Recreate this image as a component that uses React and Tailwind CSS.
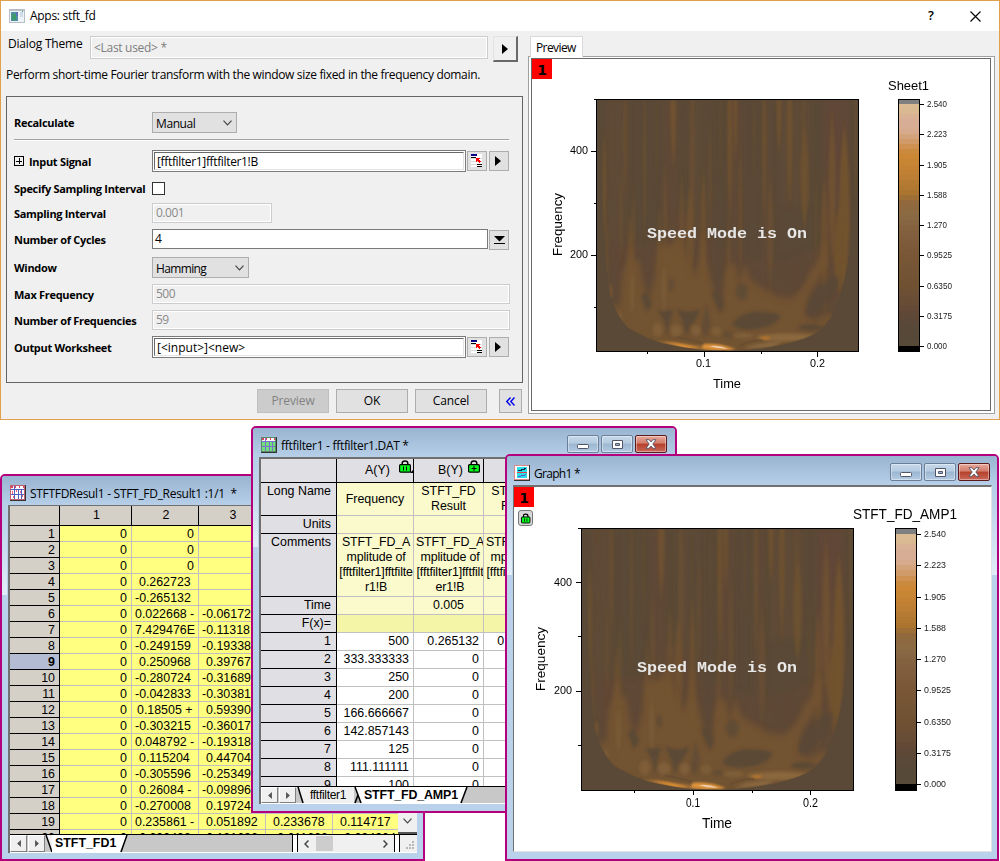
import React from "react";

const UI = "font-['Open_Sans','Noto_Sans',sans-serif]";
const SHEET = "font-['Liberation_Sans',Arial,sans-serif]";

/* ---------- Spectrogram drawing ---------- */

// x centre, top, bottom, half width, opacity
const STREAKS = [
  [222, 300, 640, 9, 0.75], [285, 120, 520, 8, 0.6], [272, 400, 720, 6, 0.5], [245, 150, 520, 5, 0.25],
  [343, 120, 660, 7, 0.55], [310, 460, 800, 9, 0.5], [430, 60, 420, 13, 0.95], [405, 380, 760, 10, 0.5],
  [487, 120, 640, 12, 0.5], [455, 420, 780, 14, 0.55], [480, 460, 800, 18, 0.8], [520, 400, 860, 14, 0.7],
  [540, 250, 640, 8, 0.4], [600, 0, 600, 10, 0.9], [617, 60, 400, 8, 0.9], [632, 330, 760, 8, 0.55],
  [672, 120, 480, 8, 0.25], [704, 60, 600, 8, 0.75], [722, 420, 820, 14, 0.5], [748, 20, 380, 12, 0.85],
  [780, 40, 540, 12, 0.85], [825, 280, 600, 18, 0.75], [822, 120, 400, 12, 0.3], [860, 400, 760, 10, 0.25],
  [908, 230, 700, 17, 0.8], [885, 440, 860, 18, 0.7], [945, 280, 800, 24, 1], [930, 520, 800, 26, 0.9],
  [978, 60, 540, 6, 0.5], [380, 120, 520, 8, 0.25], [572, 150, 460, 6, 0.25], [230, 560, 860, 7, 0.6],
  [388, 520, 820, 12, 0.5], [300, 540, 860, 12, 0.7], [596, 560, 900, 14, 0.5],
];

function Spectrogram({ id, x, y, width, height }) {
  return (
    <svg x={x} y={y} width={width} height={height} viewBox="200 209 786 755" preserveAspectRatio="none">
      <defs>
        <clipPath id={id + "-bowl"}>
          <path d="M204 209L217 480Q218 600 228 700L240 800L256 840L272 868L292 893Q340 922 395 940Q460 956 525 961L620 963Q700 958 740 948Q800 938 850 915Q890 892 915 845Q950 760 964 640L986 440V209Z" />
        </clipPath>
        <filter id={id + "-s"} x="-10%" y="-10%" width="120%" height="120%"><feGaussianBlur stdDeviation="4 10" /></filter>
        <filter id={id + "-m"} x="-20%" y="-20%" width="140%" height="140%"><feGaussianBlur stdDeviation="8 10" /></filter>
        <filter id={id + "-f"} x="-20%" y="-20%" width="140%" height="140%"><feGaussianBlur stdDeviation="5" /></filter>
        <filter id={id + "-h"} x="-20%" y="-50%" width="140%" height="200%"><feGaussianBlur stdDeviation="2.5" /></filter>
      </defs>
      <rect x="200" y="209" width="786" height="755" fill="#5a4936" />
      <g clipPath={`url(#${id}-bowl)`}>
        <g filter={`url(#${id}-m)`} fill="#624937">
          <rect x="225" y="209" width="70" height="640" opacity=".5" />
          <rect x="395" y="209" width="50" height="500" opacity=".6" />
          <rect x="475" y="209" width="40" height="400" opacity=".5" />
          <rect x="520" y="209" width="30" height="400" opacity=".4" />
          <rect x="595" y="209" width="45" height="500" opacity=".6" />
          <rect x="700" y="209" width="26" height="560" opacity=".7" />
          <rect x="745" y="209" width="100" height="320" opacity=".5" />
          <rect x="880" y="209" width="80" height="560" opacity=".8" />
          <path d="M225 640L290 640L370 640L450 540L560 640L640 680L740 700L860 660L960 560L950 800L850 930L500 970L300 900Z" opacity=".7" />
        </g>
        <g filter={`url(#${id}-s)`} fill="#75552f" opacity=".85">
          {STREAKS.map(([cx, t, b, w, o], i) => (
            <path key={i} opacity={o} d={`M${cx} ${t}Q${cx + 1.35 * w} ${(t + b) / 2} ${cx} ${b}Q${cx - 1.35 * w} ${(t + b) / 2} ${cx} ${t}Z`} />
          ))}
        </g>
        <path
          filter={`url(#${id}-m)`}
          fill="#745431"
          opacity=".92"
          d="M240 870L256 820L270 830L276 730L292 690L300 640L312 695L328 690L340 770L358 800L374 740L384 640L400 650L430 640L446 600L474 690L490 740L508 690L518 600L530 700L552 780L562 830L578 830L582 740L598 700L618 705L628 760L645 700L662 750L700 775L745 800L785 805L820 770L845 720L868 690L886 620L892 700L870 745L840 790L826 850L850 872L900 850L920 860L860 930L740 965L500 975L380 960L290 910Z"
        />
        <g filter={`url(#${id}-f)`} fill="#5b4936">
          <path d="M384 844L430 840L418 880L414 924L404 878Z" opacity=".95" />
          <path d="M440 836Q475 856 510 838Q500 872 480 888L469 920L460 880Z" opacity=".95" />
          <path d="M514 900L529 820L542 880L528 924Z" opacity=".7" />
          <path d="M546 790L562 780L582 822L572 852Z" />
          <path d="M333 800L350 783L366 822L350 846Z" />
          <ellipse cx="424" cy="765" rx="8" ry="18" opacity=".7" />
          <ellipse cx="636" cy="785" rx="18" ry="26" opacity=".75" />
          <path d="M606 885Q630 848 680 846Q740 846 752 858Q740 887 690 896Q640 907 606 885Z" />
          <path d="M712 760Q715 690 740 720L760 770Q740 790 712 760Z" opacity=".45" />
          <path d="M760 690L825 680L820 750L785 795L765 750Z" opacity=".55" />
          <path d="M828 855Q836 795 876 765Q910 730 928 745Q925 795 890 820Q860 864 828 855Z" opacity=".85" />
          <ellipse cx="842" cy="893" rx="36" ry="10" />
          <path d="M550 650L585 630L577 750L560 780Z" opacity=".6" />
          <ellipse cx="594" cy="915" rx="14" ry="10" opacity=".6" />
        </g>
        <g filter={`url(#${id}-f)`}>
          <g fill="#84623d">
            <ellipse cx="382" cy="900" rx="15" ry="22" opacity=".7" /><ellipse cx="438" cy="902" rx="18" ry="18" opacity=".8" />
            <ellipse cx="498" cy="902" rx="14" ry="16" opacity=".8" /><ellipse cx="560" cy="904" rx="16" ry="14" opacity=".6" />
            <ellipse cx="402" cy="780" rx="6" ry="70" opacity=".5" /><ellipse cx="306" cy="790" rx="6" ry="60" opacity=".5" />
            <ellipse cx="240" cy="785" rx="4" ry="22" fill="#8a5c2c" opacity=".8" /><ellipse cx="268" cy="860" rx="6" ry="14" opacity=".6" />
          </g>
          <ellipse cx="770" cy="923" rx="92" ry="12" fill="#8b683e" />
          <ellipse cx="640" cy="918" rx="30" ry="8" fill="#80603a" />
          <path d="M640 958Q680 936 760 938L730 952Z" fill="#8b6a43" />
        </g>
        <g filter={`url(#${id}-h)`}>
          <ellipse cx="707" cy="925" rx="15" ry="4.500" fill="#b5742a" />
          <path d="M370 934L430 936L520 950L620 955L600 966L500 962Z" fill="#9a6b36" />
          <path d="M400 938L450 942L510 955L470 957Z" fill="#dc9036" />
          <path d="M520 943Q570 939 615 958L560 963L516 956Z" fill="#dd923a" />
        </g>
        <path d="M538 950Q565 945 594 957Q570 959 538 950Z" fill="#ecccae" />
        <path d="M440 921Q480 930 520 940M630 948Q660 930 700 932" fill="none" stroke="#644a30" strokeWidth="5" opacity=".6" />
      </g>
    </svg>
  );
}

/* ---------- Colour scale ---------- */

const STOPS = [
  [0, 0xdc, 0xbc, 0x90], [0.04, 0xda, 0xb8, 0x92], [0.06, 0xd8, 0xae, 0x98], [0.11, 0xd6, 0xac, 0x90], [0.15, 0xd2, 0x9e, 0x70],
  [0.19, 0xcd, 0x8b, 0x42], [0.22, 0xcb, 0x87, 0x33], [0.3, 0xbd, 0x7e, 0x34], [0.37, 0xa9, 0x74, 0x30],
  [0.4, 0x92, 0x69, 0x3c], [0.46, 0x8a, 0x6a, 0x44], [0.53, 0x81, 0x5f, 0x3f], [0.62, 0x7a, 0x58, 0x36],
  [0.75, 0x6f, 0x51, 0x33], [0.82, 0x68, 0x4c, 0x36], [0.87, 0x5f, 0x47, 0x37], [0.93, 0x57, 0x48, 0x38], [1, 0x57, 0x4a, 0x37],
];
function scaleColor(t) {
  let i = 0;
  while (i < STOPS.length - 2 && STOPS[i + 1][0] < t) i++;
  const a = STOPS[i], b = STOPS[i + 1];
  const k = (t - a[0]) / (b[0] - a[0]);
  return `rgb(${[1, 2, 3].map((c) => Math.round(a[c] + (b[c] - a[c]) * k)).join(",")})`;
}
const LEVELS = [["2.540", 1], ["2.223", 1], ["1.905", 1], ["1.588", 1], ["1.270", 1], ["0.9525", 0], ["0.6350", 0], ["0.3175", 0], ["0.000", 1]];

function ColorScale({ x, top, first, last, bottom, size, short, long }) {
  const n = 48;
  const at = (i) => Math.round(first + ((last - first) * i) / n);
  return (
    <g>
      <rect x={x} y={top} width="22" height={bottom - top} fill="#000" />
      <rect x={x + 1} y={top + 1} width="20" height={first - top} fill="#808080" />
      {Array.from({ length: n }, (_, i) => (
        <rect key={i} x={x + 1} y={at(i)} width="20" height={at(i + 1) - at(i)} fill={scaleColor((i + 0.5) / n)} />
      ))}
      {LEVELS.map(([label, s], i) => {
        const y = Math.round(first + ((last - first) * i) / 8);
        return (
          <g key={label}>
            <rect x={x + 22} y={y} width="4" height="1" />
            <text x={x + 29} y={y + size * 0.36} fontSize={size} textLength={s ? short : long} lengthAdjust="spacingAndGlyphs" fill="#222">{label}</text>
          </g>
        );
      })}
    </g>
  );
}

function Ticks({ xs, ys, left, bottom }) {
  return (
    <g>
      {ys.map(([y, l]) => <rect key={"y" + y} x={left - l} y={y} width={l} height="1" />)}
      {xs.map(([x, l]) => <rect key={"x" + x} x={x} y={bottom} width="1" height={l} />)}
    </g>
  );
}

function SpeedMode({ x, y }) {
  return (
    <text x={x} y={y} fontSize="14.5" fontWeight="700" fill="#e8e8e8" textLength="160" lengthAdjust="spacingAndGlyphs" fontFamily="'Liberation Mono','Courier New',monospace">
      Speed Mode is On
    </text>
  );
}

const fit = (n) => ({ textLength: n, lengthAdjust: "spacingAndGlyphs" });

function PreviewGraph() {
  return (
    <svg width="458" height="351" viewBox="532 59 458 351" fontFamily="'Liberation Sans',Arial,sans-serif" className="block">
      <Spectrogram id="pv" x={597} y={100} width={261} height={251} />
      <rect x="596.5" y="99.5" width="262" height="252" fill="none" stroke="#000" />
      <Ticks left={596} bottom={352} ys={[[99, 2], [151, 5], [203, 2], [255, 5], [307, 2]]} xs={[[647, 2], [704, 5], [761, 2], [817, 5]]} />
      <text x="570" y="154" fontSize="11.5" {...fit(18)}>400</text>
      <text x="570" y="258" fontSize="11.5" {...fit(18)}>200</text>
      <text x="696" y="367" fontSize="11.5" {...fit(15)}>0.1</text>
      <text x="810" y="367" fontSize="11.5" {...fit(15)}>0.2</text>
      <text x="713" y="388" fontSize="13" {...fit(28)}>Time</text>
      <text transform="translate(562 256)rotate(-90)" fontSize="13" {...fit(63)}>Frequency</text>
      <text x="888" y="90" fontSize="13" {...fit(41)}>Sheet1</text>
      <ColorScale x={898} top={99} first={104} last={346} bottom={352} size={8.6} short={20} long={25} />
      <SpeedMode x={647} y={238} />
    </svg>
  );
}

function ResultGraph() {
  return (
    <svg width="477" height="364" viewBox="514 487 477 364" fontFamily="'Liberation Sans',Arial,sans-serif" className="block">
      <Spectrogram id="rs" x={582} y={529} width={271} height={261} />
      <rect x="581.5" y="528.5" width="272" height="262" fill="none" stroke="#000" />
      <Ticks left={581} bottom={791} ys={[[528, 3], [582, 5], [636, 3], [691, 5], [745, 3]]} xs={[[634, 2], [693, 4], [752, 2], [810, 4]]} />
      <text x="554" y="586" fontSize="11.5" {...fit(18)}>400</text>
      <text x="554" y="694" fontSize="11.5" {...fit(18)}>200</text>
      <text x="686" y="807" fontSize="12" {...fit(14)}>0.1</text>
      <text x="803" y="807" fontSize="12" {...fit(15)}>0.2</text>
      <text x="702" y="828" fontSize="14" {...fit(30)}>Time</text>
      <text transform="translate(545 691)rotate(-90)" fontSize="13.5" {...fit(64)}>Frequency</text>
      <text x="853" y="519" fontSize="14" {...fit(104)}>STFT_FD_AMP1</text>
      <ColorScale x={895} top={528} first={534} last={784} bottom={791} size={9.3} short={22} long={27} />
      <SpeedMode x={637} y={672} />
    </svg>
  );
}

/* ---------- Icons ---------- */

const AppIcon = () => (
  <svg width="16" height="14" viewBox="0 0 16 14" shapeRendering="crispEdges">
    <rect width="16" height="14" fill="#b8bec6" /><rect x="1" y="2" width="14" height="11" fill="#eef3f8" />
    <rect x="2" y="3" width="7" height="9" fill="#4d8fa0" /><rect x="3" y="5" width="4" height="6" fill="#3c9a6c" />
    <rect x="7" y="3" width="2" height="4" fill="#5a6fb8" /><rect x="11" y="3" width="3" height="5" fill="#cfdbe8" /><rect x="13" y="2" width="1" height="1" fill="#3da05c" />
  </svg>
);
const PickIcon = () => (
  <svg width="12" height="14" viewBox="0 0 12 14" shapeRendering="crispEdges">
    <rect width="11" height="13" fill="#fff" />
    <path d="M0 4h11v1H0zM0 7h11v1H0zM0 10h11v1H0z" fill="#dcdcdc" />
    <rect width="6" height="2" fill="#00008b" /><rect y="3" width="5" height="1" fill="#000" />
    <path d="M5 4h4v1h-1v1h1v1h1v1h-1v1h-1v-1h-1v-1h-1v1h-1z" fill="#f00" />
    <rect x="6" y="10" width="5" height="1" /><rect x="6" y="12" width="5" height="1" />
  </svg>
);
const Play = () => <svg width="6" height="10" viewBox="0 0 6 10"><path d="M0 0L6 5L0 10Z" /></svg>;
const Chevron = () => <svg width="9" height="6" viewBox="0 0 9 6" fill="none" stroke="#444" strokeWidth="1.2"><path d="M.5 .7L4.5 4.8L8.5 .7" /></svg>;
const SheetIcon = ({ green }) => (
  <svg width="16" height="16" viewBox="0 0 16 16" shapeRendering="crispEdges">
    <rect width="16" height="16" fill="#333" /><rect width="15" height="15" fill={green ? "#6fe07c" : "#fff"} />
    <rect width="15" height="4" fill="#fff" />
    <path d="M1 1h2v2H1zM5 1h1v2H5zM9 1h1v2H9zM13 1h1v2h-1z" fill="#e04060" />
    {!green && <path d="M2 6h1v3H2zM6 5h1v2H6zM10 6h1v2h-1zM3 11h1v2H3zM8 10h1v3H8zM12 10h1v2h-1z" fill="#f06070" />}
    <path d="M0 4h15v1H0zM0 9h15v1H0zM4 0h1v15H4zM11 4h1v11h-1zM8 4h1v11H8z" fill={green ? "#7a6fd0" : "#5060c0"} />
    <path d="M0 0h15v1H0zM0 0h1v15H0zM0 14h15v1H0zM14 0h1v15h-1z" fill={green ? "#5a8a6a" : "#c06070"} />
  </svg>
);
const GraphIcon = () => (
  <svg width="16" height="16" viewBox="0 0 16 16" shapeRendering="crispEdges">
    <rect width="16" height="16" fill="#333" /><rect width="15" height="15" fill="#fff" />
    <path d="M0 0h15v1H0zM0 14h15v1H0zM0 0h1v15H0z" fill="#d88" />
    <rect x="3" y="2" width="10" height="5" fill="#28e0e8" /><rect x="3" y="8" width="10" height="5" fill="#28e0e8" />
    <path d="M3 7h10v1H3z" fill="#e04050" /><path d="M4 5h3V4h3V3h2v1h-1v1H8v1H4z" fill="#124" />
    <path d="M4 11h3v-1h4V9h1v1h-1v1H7v1H4z" fill="#6050d0" />
  </svg>
);
function Lock({ plus, corner }) {
  return (
    <svg width="14" height="13" viewBox="0 0 14 13">
      <path d="M3.2 5V3.2Q3.2 1 6 1T8.8 3.2V5" fill="none" stroke="#000" strokeWidth="1.5" />
      <rect x=".6" y="4.6" width="10.8" height="7.600" rx="1" fill="#00ff1a" stroke="#000" strokeWidth="1.2" />
      {plus ? <path d="M6 6v5M3.500 8.500h5" stroke="#000" /> : <path d="M4.500 6.500v4M7.500 6.500v4" stroke="#000" strokeWidth="1" />}
      {corner && <path d="M14 10v3h-3z" />}
    </svg>
  );
}

/* ---------- Dialog ---------- */

const Label = ({ children }) => <div className="w-[138px] shrink-0 text-[11px] leading-[15px] font-bold tracking-[-0.3px] whitespace-nowrap text-black">{children}</div>;
const DisabledField = ({ className, children }) => (
  <div className={`h-[20px] border border-[#cccccc] p-px ${className}`}>
    <div className="h-full bg-[#f0f0f0] pl-[2px] text-[12px] leading-[16px] tracking-[-0.5px] text-[#8a8a8a] outline outline-white">{children}</div>
  </div>
);
const SquareButton = ({ children, className = "" }) => (
  <div className={`flex h-[20px] w-[20px] shrink-0 items-center justify-center border border-[#adadad] bg-[#e1e1e1] ${className}`}>{children}</div>
);
const Combo = ({ children, className }) => (
  <div className={`flex h-[21px] items-center justify-between border border-[#adadad] bg-[#e1e1e1] pr-[4px] pl-[3px] text-[12px] ${className}`}>
    <span className="pt-[2px]">{children}</span><Chevron />
  </div>
);
const RangeField = ({ children, textClass = "" }) => (
  <>
    <div className="h-[22px] w-[314px] border border-[#7a7a7a] bg-white p-px">
      <div className={`h-full border-t border-r border-b border-l border-t-[#696969] border-r-[#e3e3e3] border-b-[#e3e3e3] border-l-[#696969] pl-[2px] text-[12px] leading-[17px] ${textClass}`}>{children}</div>
    </div>
    <SquareButton className="ml-px"><PickIcon /></SquareButton>
    <SquareButton className="ml-[2px]"><span className="-ml-[2px]"><Play /></span></SquareButton>
  </>
);
const PushButton = ({ children, className = "bg-[#e1e1e1] border-[#adadad] text-black" }) => (
  <div className={`mr-[7px] flex h-[24px] w-[72px] items-center justify-center border text-[12px] tracking-[-0.1px] ${className}`}>{children}</div>
);

function Dialog() {
  return (
    <div className={`absolute top-0 left-0 flex h-[420px] w-[1000px] flex-col border border-[#e0a04c] bg-[#f0f0f0] text-[12px] text-black ${UI}`}>
      <div className="flex h-[30px] shrink-0 items-center bg-white pr-[18px] pl-[8px]">
        <AppIcon />
        <span className="ml-[5px] tracking-[-0.28px]">Apps: stft_fd</span>
        <span className="ml-auto text-[13px] font-semibold">?</span>
        <svg className="ml-[36px]" width="11" height="11" viewBox="0 0 11 11" stroke="#000" strokeWidth="1.1"><path d="M.5 .5L10.5 10.5M10.5 .5L.5 10.5" /></svg>
      </div>
      <div className="flex flex-1">
        <div className="flex w-[527px] flex-col">
          <div className="flex pt-[5px] pl-[7px]">
            <div className="w-[82px] leading-[16px] tracking-[-0.2px] whitespace-nowrap">Dialog Theme</div>
            <div className="h-[23px] w-[398px] border border-[#cccccc] p-px">
              <div className="h-full pl-[2px] leading-[19px] tracking-[-0.3px] text-[#7d7d7d] outline outline-white">&lt;Last used&gt; *</div>
            </div>
            <div className="ml-[5px] flex h-[26px] w-[25px] items-center justify-center border-t border-r-2 border-b-2 border-l border-t-[#e3e3e3] border-r-[#696969] border-b-[#696969] border-l-[#e3e3e3] bg-[#f0f0f0]"><Play /></div>
          </div>
          <div className="mt-[5px] pl-[5px] leading-[16px] tracking-[-0.34px] whitespace-nowrap">Perform short-time Fourier transform with the window size fixed in the frequency domain.</div>
          <div className="mt-[13px] ml-[5px] h-[287px] w-[517px] border border-[#646464] pl-[7px]">
            <div className="mt-[15px] flex items-center"><Label>Recalculate</Label><Combo className="w-[85px] tracking-[-0.4px]">Manual</Combo></div>
            <div className="mt-[6px] h-[2px] w-[495px] border-t border-b border-t-[#a0a0a0] border-b-white" />
            <div className="mt-[9px] flex items-center">
              <Label>
                <span className="flex items-center gap-[5px]">
                  <svg width="10" height="10" viewBox="0 0 10 10" fill="none" stroke="#000" shapeRendering="crispEdges"><rect x=".5" y=".5" width="9" height="9" /><path d="M2 5h6M5 2v6" /></svg>
                  Input Signal
                </span>
              </Label>
              <RangeField textClass="tracking-[-0.35px]">[fftfilter1]fftfilter1!B</RangeField>
            </div>
            <div className="mt-[10px] flex h-[13px] items-center"><Label>Specify Sampling Interval</Label><div className="h-[13px] w-[13px] border border-[#333] bg-white" /></div>
            <div className="mt-[8px] flex items-center"><Label>Sampling Interval</Label><DisabledField className="w-[120px]">0.001</DisabledField></div>
            <div className="mt-[6px] flex h-[20px] items-center">
              <Label>Number of Cycles</Label>
              <div className="h-[20px] w-[336px] border border-[#7a7a7a] bg-white pl-[2px] leading-[17px]">4</div>
              <SquareButton className="mt-[2px] ml-px"><svg width="11" height="8" viewBox="0 0 11 8"><path d="M0 0h11L5.500 5.500zM0 7h11v1H0z" /></svg></SquareButton>
            </div>
            <div className="mt-[8px] flex items-center"><Label>Window</Label><Combo className="w-[97px] tracking-[-0.65px]">Hamming</Combo></div>
            <div className="mt-[6px] flex items-center"><Label>Max Frequency</Label><DisabledField className="w-[358px]">500</DisabledField></div>
            <div className="mt-[6px] flex items-center"><Label>Number of Frequencies</Label><DisabledField className="w-[358px]">59</DisabledField></div>
            <div className="mt-[6px] flex items-center"><Label>Output Worksheet</Label><RangeField>[&lt;input&gt;]&lt;new&gt;</RangeField></div>
          </div>
          <div className="mt-[6px] flex pl-[256px]">
            <PushButton className="border-[#bfbfbf] bg-[#cccccc] text-[#838383]">Preview</PushButton>
            <PushButton>OK</PushButton>
            <PushButton>Cancel</PushButton>
            <div className="ml-[5px] flex h-[24px] w-[23px] items-center justify-center border border-[#adadad] bg-[#e1e1e1]">
              <svg width="9" height="9" viewBox="0 0 9 9" fill="none" stroke="#0000e8" strokeWidth="1.400"><path d="M4.500 .5L.8 4.500L4.500 8.500M8.500 .5L4.800 4.500L8.500 8.500" /></svg>
            </div>
          </div>
        </div>
        <div className="flex w-[467px] flex-col pt-[5px]">
          <div className="z-10 flex h-[20px] pl-[2px]"><div className="h-[21px] w-[53px] shrink-0 border-t border-r border-l border-[#d9d9d9] bg-white pl-[5px] leading-[21px] tracking-[-0.6px]">Preview</div></div>
          <div className="h-[358px] border border-[#a0a0a0] bg-white pt-px pr-[2px] pl-[2px]">
            <div className="relative h-[353px] w-[460px] border border-[#696969]">
              <PreviewGraph />
              <PageBadge />
            </div>
          </div>
        </div>
      </div>
    </div>
  );
}

const PageBadge = () => <div className="absolute top-0 left-0 flex h-[20px] w-[20px] items-center justify-center bg-[#ff0000] pt-[2px] font-['DejaVu_Sans',sans-serif] text-[14px] font-bold text-black">1</div>;

/* ---------- Child windows ---------- */

function Window({ className, icon, title, titleClass = "", buttons, buttonsClass = "", children }) {
  return (
    <div className={`absolute flex flex-col overflow-hidden rounded-t-[5px] border-2 border-[#b4007c] bg-[#b9d1ea] ${className}`}>
      <div className="absolute top-[28px] left-0 h-[91px] w-[5px] bg-linear-to-b from-[#b5cde7] to-[#e2edf9]" />
      <div className="absolute top-[28px] right-0 h-[91px] w-[5px] bg-linear-to-b from-[#b5cde7] to-[#e2edf9]" />
      <div className={`flex h-[29px] shrink-0 items-center bg-linear-to-b from-[#99b4d1] to-[#b7cfe8] pt-[4px] text-[12px] text-black ${UI}`}>
        {icon}
        <span className={`ml-[4px] pt-[2px] whitespace-pre ${titleClass}`}>{title}</span>
        {buttons && <div className={`mb-[1px] ml-auto flex gap-[2px] ${buttonsClass}`}><CaptionButton kind="min" /><CaptionButton kind="max" /><CaptionButton kind="close" /></div>}
      </div>
      {children}
    </div>
  );
}

function CaptionButton({ kind }) {
  const skin = kind === "close"
    ? "border-[#5c1a1a] bg-[linear-gradient(#e8a99b_0%,#d27c6a_45%,#b5402a_50%,#c9685a_100%)]"
    : "border-[#6b8098] bg-[linear-gradient(#c6d8ea_0%,#b5cbe0_45%,#9bb6d0_50%,#b4cce4_100%)]";
  return (
    <div className={`flex h-[18px] w-[32px] items-center justify-center rounded-[2px] border ${skin} shadow-[inset_0_0_0_1px_rgba(255,255,255,0.4)]`}>
      {kind === "min" && <svg className="mt-[4px]" width="12" height="5" viewBox="0 0 12 5"><rect x=".5" y=".5" width="11" height="4" rx="1" fill="#fff" stroke="#535666" /></svg>}
      {kind === "max" && <svg width="11" height="9" viewBox="0 0 11 9"><path fillRule="evenodd" d="M.5 .5h10v8H.5zM3.500 3.500v2h4v-2z" fill="#fff" stroke="#535666" /></svg>}
      {kind === "close" && <svg width="12" height="10" viewBox="0 0 12 10"><path d="M1 .7H4L6 3L8 .7H11L7.800 5L11 9.300H8L6 7L4 9.300H1L4.200 5Z" fill="#fff" stroke="#535666" strokeWidth=".9" /></svg>}
    </div>
  );
}

const NavButtons = () => (
  <div className="flex h-full shrink-0 gap-px">
    {["M5 0L0 4.5L5 9Z", "M0 0L5 4.5L0 9Z"].map((d) => (
      <div key={d} className="flex h-full w-[17px] items-center justify-center border border-t-white border-r-[#808080] border-b-[#808080] border-l-white bg-[#f0f0f0]">
        <svg width="4" height="7" viewBox="0 0 5 9"><path d={d} fill="#555" /></svg>
      </div>
    ))}
  </div>
);

const RESULT_ROWS = [
  ["0", ""], ["0", ""], ["0", ""], ["0.262723", ""], ["-0.265132", ""],
  ["0.022668 -", "-0.06172"], ["7.429476E", "-0.11318"], ["-0.249159", "-0.19338"], ["0.250968", "0.39767"],
  ["-0.280724", "-0.31689"], ["-0.042833", "-0.30381"], ["0.18505 +", "0.59390"], ["-0.303215", "-0.36017"],
  ["0.048792 -", "-0.19318"], ["0.115204", "0.44704"], ["-0.305596", "-0.25349"], ["0.26084 -", "-0.09896"],
  ["-0.270008", "0.19724"], ["0.235861 -", "0.051892", "0.233678", "0.114717"], ["-0.330498", "-0.181686", "-0.211663", "-0.234904"],
];
function secondPad(v) {
  if (v === "0") return "pl-[55px]";
  if (v.startsWith("-") || v.length === 10 || v.endsWith("E")) return "pl-[3px]";
  if (v.endsWith("+")) return "pl-[5px]";
  return "pl-[7px]";
}

function ResultWindow() {
  const cell = "h-[16px] shrink-0 overflow-hidden border-r border-b border-[#c0c0c0] leading-[16px] whitespace-pre";
  const head = "h-[20px] shrink-0 border-r border-b border-black pl-[2px] text-center leading-[19px]";
  return (
    <Window className="top-[474px] left-0 h-[387px] w-[425px]" icon={<span className="pl-[8px]"><SheetIcon /></span>} titleClass="tracking-[-0.3px]" title="STFTFDResul1 - STFT_FD_Result1 :1/1  *">
      <div className={`mx-[6px] h-[348px] w-[409px] overflow-hidden border-t border-l-2 border-[#707070] bg-white text-[12.400px] text-black ${SHEET}`}>
        <div className="flex h-[328px] overflow-hidden">
          <div className="flex w-[388px] shrink-0 flex-col overflow-hidden bg-[#ffff80]">
            <div className="flex bg-[#d4d0c8]">
              <div className={`w-[50px] ${head}`} /><div className={`w-[72px] ${head}`}>1</div><div className={`w-[67px] ${head}`}>2</div><div className={`w-[67px] ${head}`}>3</div><div className={`w-[67px] ${head}`}>4</div><div className={`w-[66px] ${head}`}>5</div>
            </div>
            {RESULT_ROWS.map((r, i) => (
              <div key={i} className="flex">
                <div className={`h-[16px] w-[50px] shrink-0 border-r border-b border-black pr-[4px] text-right leading-[16px] ${i === 8 ? "bg-[#b4bcd4] font-bold" : "bg-[#d4d0c8]"}`}>{i + 1}</div>
                <div className={`w-[72px] pr-[4px] text-right ${cell}`}>0</div>
                <div className={`w-[67px] ${secondPad(r[0])} ${cell}`}>{r[0]}</div>
                <div className={`w-[67px] ${r[1].startsWith("-") ? "pl-[3px]" : "pl-[7px]"} ${cell}`}>{r[1]}</div>
                <div className={`w-[67px] pl-[7px] ${cell}`}>{r[2]}</div>
                <div className={`w-[66px] pl-[7px] ${cell}`}>{r[3]}</div>
              </div>
            ))}
          </div>
          <div className="flex flex-1 flex-col items-center justify-end border-b-2 border-[#555] bg-[#f0f0f0] pb-[8px]"><Chevron /></div>
        </div>
        <div className="flex h-[18px] border-t border-black bg-[#c8c8c8]">
          <NavButtons />
          <svg width="7" height="18" viewBox="0 0 7 18"><path d="M0 0H7V17Z" fill="#f0f0f0" /><path d="M1 0L7 17" stroke="#000" strokeWidth="1.500" /></svg>
          <div className="w-[68px] bg-white pl-[3px] leading-[16px] font-bold whitespace-nowrap">STFT_FD1</div>
          <svg width="8" height="18" viewBox="0 0 8 18"><path d="M0 0H7L0 17Z" fill="#fff" /><path d="M7 0L1 17" stroke="#000" strokeWidth="1.500" /></svg>
          <div className="ml-auto flex h-full w-[125px] bg-[#f0f0f0]">
            <div className="w-[6px] border-x border-black bg-white" />
            <div className="flex flex-1 items-center px-[6px]">
              <svg width="5" height="8" viewBox="0 0 5 8" fill="none" stroke="#444" strokeWidth="1.500"><path d="M4.500 .5L1 4L4.500 7.500" /></svg>
              <div className="ml-[7px] h-[15px] w-[17px] bg-[#cdcdcd]" />
              <svg className="ml-auto" width="5" height="8" viewBox="0 0 5 8" fill="none" stroke="#444" strokeWidth="1.500"><path d="M.5 .5L4 4L.5 7.500" /></svg>
            </div>
            <div className="w-[6px] border-x border-black bg-white" />
            <div className="flex w-[17px] items-end justify-end p-[2px]"><svg width="9" height="9" viewBox="0 0 9 9" fill="#b8b8b8"><path d="M6 0h2v2H6zM3 3h2v2H3zM6 3h2v2H6zM0 6h2v2H0zM3 6h2v2H3zM6 6h2v2H6z" /></svg></div>
          </div>
        </div>
      </div>
    </Window>
  );
}

const DATA_ROWS = [["500", "0.265132", "0.234904"], ["333.333333", "0", ""], ["250", "0", ""], ["200", "0", ""], ["166.666667", "0", ""], ["142.857143", "0", ""], ["125", "0", ""], ["111.111111", "0", ""], ["100", "0", ""]];

function FilterWindow() {
  const rowHead = "w-[76px] shrink-0 border-r border-b border-black bg-[#e0dfe3] pr-[5px] text-right whitespace-nowrap";
  const cell = "shrink-0 overflow-hidden border-r border-b border-[#c0c0c0]";
  const a = `w-[77px] ${cell}`;
  const b = `w-[70px] ${cell}`;
  return (
    <Window className="top-[426px] left-[251px] h-[387px] w-[426px]" icon={<span className="pl-[8px]"><SheetIcon green /></span>} titleClass="tracking-[-0.3px]" title="fftfilter1 - fftfilter1.DAT *" buttons buttonsClass="mr-[8px]">
      <div className={`mx-[6px] h-[347px] w-[409px] overflow-hidden border-t-2 border-l-2 border-[#707070] bg-white text-[12.400px] text-black ${SHEET}`}>
        <div className="h-[327px] overflow-hidden">
          <div className="flex h-[24px] bg-[#e0dfe3] leading-[22px]">
            <div className="w-[76px] border-r border-b border-black" />
            <div className="flex w-[77px] items-start border-r border-b border-black pl-[28px]">A(Y)<span className="mt-px ml-auto"><Lock corner /></span></div>
            <div className="flex w-[70px] items-start border-r border-b border-black pl-[24px]">B(Y)<span className="mt-px mr-[1px] ml-auto"><Lock plus /></span></div>
            <div className="w-[70px] border-r border-b border-black" />
          </div>
          <div className="flex h-[33px] bg-[#fafacd] leading-[15px]">
            <div className={`pt-px ${rowHead}`}>Long Name</div>
            <div className={`flex items-center justify-center ${a}`}>Frequency</div>
            <div className={`pt-px text-center ${b}`}>STFT_FD<br />Result</div>
            <div className={`pt-px text-center ${b}`}>STFT_FD<br />Result</div>
          </div>
          <div className="flex h-[18px] bg-[#fafacd] leading-[17px]"><div className={rowHead}>Units</div><div className={a} /><div className={b} /><div className={b} /></div>
          <div className="flex h-[63px] bg-[#fafacd] leading-[15px] whitespace-nowrap">
            <div className={`pt-px ${rowHead}`}>Comments</div>
            <div className={`flex flex-col items-center pt-px pl-[2px] tracking-[-0.15px] ${a}`}><span>STFT_FD_A</span><span>mplitude of</span><span>[fftfilter1]fftfilte</span><span>r1!B</span></div>
            <div className={`flex flex-col items-center pt-px pl-[3px] tracking-[-0.15px] ${b}`}><span>STFT_FD_A</span><span>mplitude of</span><span>[fftfilter1]fftfilt</span><span>er1!B</span></div>
            <div className={`flex flex-col items-center pt-px pl-[3px] tracking-[-0.15px] ${b}`}><span>STFT_FD_A</span><span>mplitude of</span><span>[fftfilter1]fftfilt</span><span>er1!B</span></div>
          </div>
          <div className="flex h-[18px] bg-[#fafacd] leading-[17px]"><div className={rowHead}>Time</div><div className={a} /><div className={`text-center ${b}`}>0.005</div><div className={b} /></div>
          <div className="flex h-[18px] bg-[#f5f5a8] leading-[17px]"><div className={rowHead}>F(x)=</div><div className={a} /><div className={b} /><div className={b} /></div>
          {DATA_ROWS.map(([x, y, z], i) => (
            <div key={i} className="flex h-[18px] leading-[17px]">
              <div className={rowHead}>{i + 1}</div>
              <div className={`pr-[4px] text-right ${a}`}>{x}</div>
              <div className={`pr-[4px] text-right ${b}`}>{y}</div>
              <div className={`pr-[4px] text-right ${b}`}>{z}</div>
            </div>
          ))}
        </div>
        <div className="flex h-[17px] border-t border-black bg-[#c8c8c8]">
          <NavButtons />
          <svg width="8" height="17" viewBox="0 0 8 17"><path d="M0 0H8V16Z" fill="#f0f0f0" /><path d="M2 0L7 16" stroke="#000" strokeWidth="1.500" /></svg>
          <div className="w-[50px] bg-[#f0f0f0] pl-[6px] text-[12px] leading-[16px] tracking-[-0.3px]">fftfilter1</div>
          <svg width="8" height="17" viewBox="0 0 8 17"><path d="M0 0H8V16Z" fill="#fff" /><path d="M0 16L3.500 6L7 16Z" fill="#b0b0b0" /><path d="M1 0L7 16M1 16L4 8" stroke="#000" strokeWidth="1.500" /></svg>
          <div className="w-[98px] bg-white pl-[2px] leading-[16px] font-bold tracking-[-0.15px] whitespace-nowrap">STFT_FD_AMP1</div>
          <svg width="8" height="17" viewBox="0 0 8 17"><path d="M0 0H7L0 16Z" fill="#fff" /><path d="M7 0L1 16" stroke="#000" strokeWidth="1.500" /></svg>
        </div>
      </div>
    </Window>
  );
}

function GraphWindow() {
  return (
    <Window className="top-[454px] left-[505px] h-[407px] w-[494px]" icon={<span className="pl-[7px]"><GraphIcon /></span>} title="Graph1 *" titleClass="tracking-[-0.7px]" buttons buttonsClass="mr-[7px]">
      <div className="relative mx-[6px] h-[367px] w-[479px] border-t-2 border-r border-b border-l border-t-[#707070] border-r-[#e3e3e3] border-b-[#e3e3e3] border-l-[#707070] bg-white">
        <ResultGraph />
        <PageBadge />
        <div className="absolute top-[23px] left-[4px] flex h-[16px] w-[15px] items-center justify-center rounded-[3px] border border-[#777] bg-[#d8d8d8] pl-[2px]"><Lock /></div>
      </div>
    </Window>
  );
}

export default function App() {
  return (
    <div className="relative h-[861px] w-[1000px] overflow-hidden bg-white">
      <Dialog />
      <ResultWindow />
      <FilterWindow />
      <GraphWindow />
    </div>
  );
}
